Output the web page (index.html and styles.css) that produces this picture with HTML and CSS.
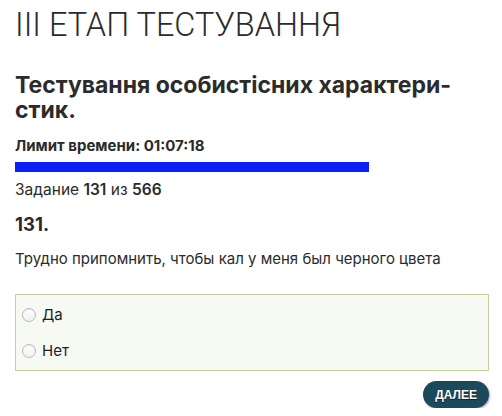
FILE: index.html
```html
<!DOCTYPE html>
<html lang="uk">
<head>
    <meta charset="UTF-8">
    <meta name="viewport" content="width=device-width, initial-scale=1.0">
    <title>III етап тестування</title>
    <link rel="stylesheet" href="styles.css">
</head>
<body>
    <main class="test-page">
        <h1 class="stage-title">III ЕТАП ТЕСТУВАННЯ</h1>
        <h2 class="test-title">Тестування особистісних характери&shy;стик.</h2>

        <p class="time-limit">Лимит времени: <span id="timer">01:07:18</span></p>
        <div class="time-bar">
            <div class="time-bar-fill" style="width: 74.7%"></div>
        </div>

        <p class="task-counter">Задание <b>131</b> из <b>566</b></p>

        <h3 class="question-num">131.</h3>
        <p class="question-text">Трудно припомнить, чтобы кал у меня был черного цвета</p>

        <form class="answer-form">
            <div class="answers">
                <label class="answer">
                    <span class="radio"></span>
                    Да
                </label>
                <label class="answer">
                    <span class="radio"></span>
                    Нет
                </label>
            </div>
            <div class="form-actions">
                <button type="button" class="btn-next">Далее</button>
            </div>
        </form>
    </main>
</body>
</html>
```

FILE: styles.css
```css
body {
    margin: 0;
    padding: 0;
    background-color: #ffffff;
    color: #2b2b2b;
    font-family: 'Inter', 'Liberation Sans', sans-serif;
}

.test-page {
    padding: 0 13px 0 15px;
}

.stage-title {
    margin: 5px 0 0;
    font-family: 'Roboto', 'Liberation Sans', sans-serif;
    font-size: 32.5px;
    font-weight: 300;
    line-height: 40px;
    color: #2b2b2b;
}

.test-title {
    margin: 28px 0 0;
    font-size: 23px;
    font-weight: 700;
    line-height: 25px;
    hyphens: manual;
}

.time-limit {
    margin: 14px 0 0;
    font-size: 15px;
    font-weight: 700;
    line-height: 18px;
}

.time-bar {
    margin-top: 7px;
    height: 10px;
}

.time-bar-fill {
    height: 100%;
    background-color: #0b20f6; /* bright blue progress */
}

.task-counter {
    margin: 8px 0 0;
    font-size: 15.5px;
    line-height: 20px;
}

.task-counter b {
    font-weight: 600;
}

.question-num {
    margin: 13px 0 0;
    font-size: 18.5px;
    font-weight: 700;
    line-height: 22px;
}

.question-text {
    margin: 14px 0 0;
    font-size: 15px;
    line-height: 20px;
}

.answer-form {
    margin-top: 25px;
}

.answers {
    display: flex;
    flex-direction: column;
    gap: 16px;
    padding: 10px 6px 9px;
    background-color: #f7f9f3;
    border: 1px solid #c4d19c;
}

.answer {
    display: flex;
    align-items: center;
    gap: 6px;
    font-size: 15px;
    line-height: 20px;
    color: #1e1e1e;
    cursor: pointer;
}

.radio {
    width: 12px;
    height: 12px;
    border: 1px solid #b9b9b9;
    border-radius: 50%;
    background: linear-gradient(#ffffff, #f1f1f1);
    box-shadow: inset 0 1px 1px rgba(0, 0, 0, 0.08);
}

.form-actions {
    display: flex;
    justify-content: flex-end;
    margin-top: 10px;
}

.btn-next {
    height: 27px;
    padding: 0 12px;
    border: none;
    border-radius: 14px;
    background-color: #1b4a5c; /* dark teal */
    color: #ffffff;
    font-family: 'Liberation Sans', Arial, sans-serif;
    font-size: 12px;
    font-weight: 700;
    text-transform: uppercase;
    text-shadow: 0 1px 1px rgba(0, 0, 0, 0.6);
    box-shadow: 1px 1px 2px rgba(0, 0, 0, 0.35);
    cursor: pointer;
}
```
